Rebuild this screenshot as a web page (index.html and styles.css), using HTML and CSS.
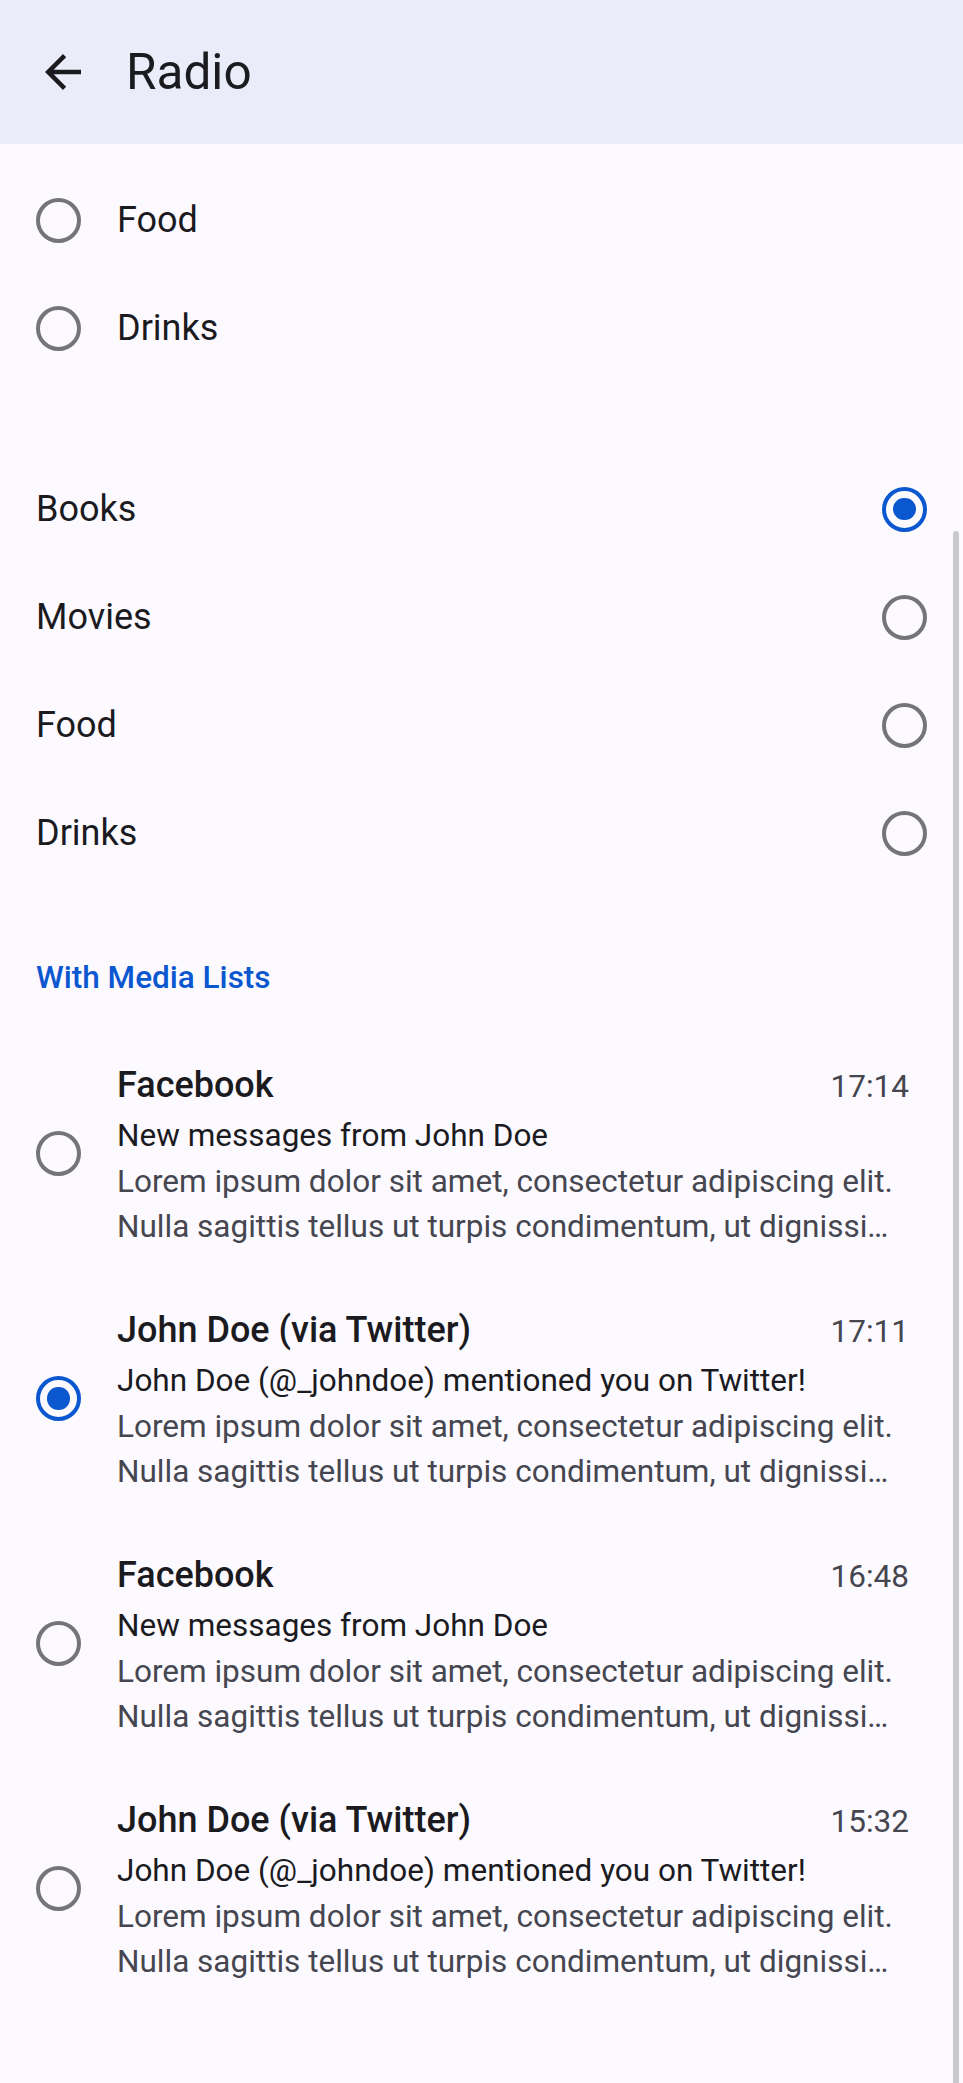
FILE: index.html
```html
<!DOCTYPE html>
<html lang="en">
<head>
<meta charset="utf-8">
<title>Radio</title>
<link rel="stylesheet" href="styles.css">
</head>
<body>
<header class="topbar">
  <button class="back" aria-label="Back">
    <svg viewBox="0 0 24 24" width="54" height="54"><path d="M20 11H7.83l5.59-5.59L12 4l-8 8 8 8 1.41-1.41L7.83 13H20v-2z" fill="#1b1b1f"/></svg>
  </button>
  <h1 class="title">Radio</h1>
</header>
<main class="content">
  <ul class="list list-leading">
    <li class="row"><span class="radio"></span><span class="label">Food</span></li>
    <li class="row"><span class="radio"></span><span class="label">Drinks</span></li>
  </ul>
  <ul class="list list-trailing">
    <li class="row"><span class="label">Books</span><span class="radio checked"></span></li>
    <li class="row"><span class="label">Movies</span><span class="radio"></span></li>
    <li class="row"><span class="label">Food</span><span class="radio"></span></li>
    <li class="row"><span class="label">Drinks</span><span class="radio"></span></li>
  </ul>
  <h2 class="subheader">With Media Lists</h2>
  <ul class="media-list">
    <li class="media">
      <span class="radio"></span>
      <div class="media-body">
        <div class="media-head"><span class="media-title">Facebook</span><span class="media-time">17:14</span></div>
        <div class="media-sub">New messages from John Doe</div>
        <div class="media-text">Lorem ipsum dolor sit amet, consectetur adipiscing elit. Nulla sagittis tellus ut turpis condimentum, ut dignissim lacus tincidunt. Cras dapibus elementum.</div>
      </div>
    </li>
    <li class="media">
      <span class="radio checked"></span>
      <div class="media-body">
        <div class="media-head"><span class="media-title">John Doe (via Twitter)</span><span class="media-time">17:11</span></div>
        <div class="media-sub">John Doe (@_johndoe) mentioned you on Twitter!</div>
        <div class="media-text">Lorem ipsum dolor sit amet, consectetur adipiscing elit. Nulla sagittis tellus ut turpis condimentum, ut dignissim lacus tincidunt. Cras dapibus elementum.</div>
      </div>
    </li>
    <li class="media">
      <span class="radio"></span>
      <div class="media-body">
        <div class="media-head"><span class="media-title">Facebook</span><span class="media-time">16:48</span></div>
        <div class="media-sub">New messages from John Doe</div>
        <div class="media-text">Lorem ipsum dolor sit amet, consectetur adipiscing elit. Nulla sagittis tellus ut turpis condimentum, ut dignissim lacus tincidunt. Cras dapibus elementum.</div>
      </div>
    </li>
    <li class="media">
      <span class="radio"></span>
      <div class="media-body">
        <div class="media-head"><span class="media-title">John Doe (via Twitter)</span><span class="media-time">15:32</span></div>
        <div class="media-sub">John Doe (@_johndoe) mentioned you on Twitter!</div>
        <div class="media-text">Lorem ipsum dolor sit amet, consectetur adipiscing elit. Nulla sagittis tellus ut turpis condimentum, ut dignissim lacus tincidunt. Cras dapibus elementum.</div>
      </div>
    </li>
  </ul>
</main>
<div class="scrollbar"></div>
</body>
</html>
```
FILE: styles.css
```css
* { box-sizing: border-box; }
html, body {
  margin: 0;
  padding: 0;
  width: 963px;
  height: 2083px;
  overflow: hidden;
}
body {
  position: relative;
  background: #fcfaff;
  font-family: Roboto, "Liberation Sans", sans-serif;
  color: #1b1b1f;
}
.topbar {
  height: 144px;
  background: #eaedf9;
  display: flex;
  align-items: center;
  padding-left: 36px;
}
.back {
  width: 54px;
  height: 54px;
  padding: 0;
  border: 0;
  background: none;
  display: flex;
}
.title {
  margin: 0 0 0 36px;
  font-size: 49.5px;
  font-weight: 400;
  line-height: 64px;
}
.list, .media-list {
  list-style: none;
  margin: 0;
  padding: 0;
}
.list-leading { margin-top: 22px; }
.list-trailing { margin-top: 73px; }
.row {
  height: 108px;
  display: flex;
  align-items: center;
  padding: 0 36px;
  gap: 36px;
  font-size: 36px;
  line-height: 54px;
}
.list-trailing .row { justify-content: space-between; }
.radio {
  flex: none;
  width: 45px;
  height: 45px;
  border: 4.5px solid #747579;
  border-radius: 50%;
  display: flex;
  align-items: center;
  justify-content: center;
}
.radio.checked { border-color: #0b57d0; }
.radio.checked::after {
  content: "";
  width: 22.5px;
  height: 22.5px;
  border-radius: 50%;
  background: #0b57d0;
}
.subheader {
  margin: 68px 0 0;
  padding: 0 36px;
  font-size: 31.5px;
  font-weight: 500;
  line-height: 45px;
  color: #0b57d0;
}
.media-list { margin-top: 31px; }
.media {
  display: flex;
  align-items: center;
  gap: 36px;
  padding: 27px 54px 27px 36px;
}
.media-body {
  flex: 1;
  min-width: 0;
}
.media-head {
  display: flex;
  justify-content: space-between;
  align-items: baseline;
  height: 54px;
  line-height: 54px;
  overflow: hidden;
}
.media-title {
  font-size: 36px;
  font-weight: 500;
  line-height: 54px;
}
.media-time {
  font-size: 31.5px;
  line-height: 54px;
  color: #45464f;
}
.media-sub {
  font-size: 31.5px;
  line-height: 47px;
}
.media-text {
  font-size: 31.5px;
  line-height: 45px;
  color: #45464f;
  display: -webkit-box;
  -webkit-box-orient: vertical;
  -webkit-line-clamp: 2;
  overflow: hidden;
}
.scrollbar {
  position: absolute;
  left: 953px;
  top: 531px;
  width: 6px;
  bottom: -6px;
  border-radius: 3px;
  background: #c9c9cc;
}
```
